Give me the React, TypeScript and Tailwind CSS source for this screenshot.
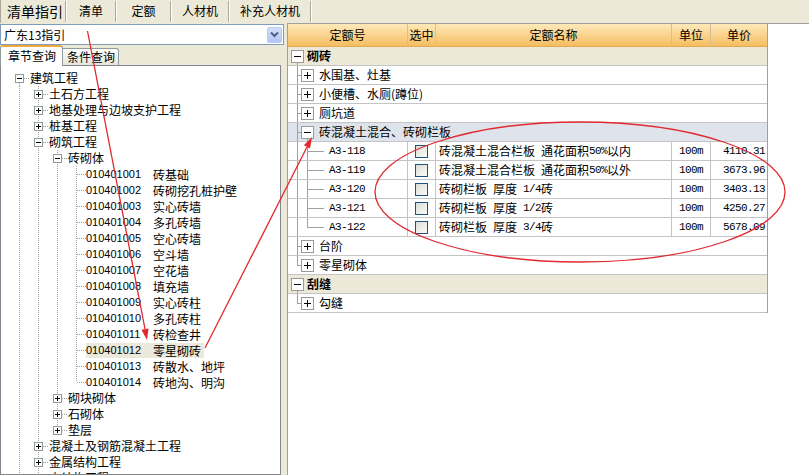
import React from 'react';

type TreeRow = {
  g: string[];
  box?: 'plus' | 'minus';
  text: string;
  code?: string;
  sel?: boolean;
};

const leaves: [string, string][] = [
  ['010401001', '砖基础'],
  ['010401002', '砖砌挖孔桩护壁'],
  ['010401003', '实心砖墙'],
  ['010401004', '多孔砖墙'],
  ['010401005', '空心砖墙'],
  ['010401006', '空斗墙'],
  ['010401007', '空花墙'],
  ['010401008', '填充墙'],
  ['010401009', '实心砖柱'],
  ['010401010', '多孔砖柱'],
  ['010401011', '砖检查井'],
  ['010401012', '零星砌砖'],
  ['010401013', '砖散水、地坪'],
  ['010401014', '砖地沟、明沟'],
];

const tree: TreeRow[] = [
  { g: ['R'], box: 'minus', text: '建筑工程' },
  { g: ['|', 'T'], box: 'plus', text: '土石方工程' },
  { g: ['|', 'T'], box: 'plus', text: '地基处理与边坡支护工程' },
  { g: ['|', 'T'], box: 'plus', text: '桩基工程' },
  { g: ['|', 'T'], box: 'minus', text: '砌筑工程' },
  { g: ['|', '|', 'T'], box: 'minus', text: '砖砌体' },
  ...leaves.map(([c, t], i) => ({
    g: ['|', '|', '|', i === leaves.length - 1 ? 'L' : 'T'],
    code: c,
    text: t,
    sel: c === '010401012',
  })),
  { g: ['|', '|', 'T'], box: 'plus', text: '砌块砌体' },
  { g: ['|', '|', 'T'], box: 'plus', text: '石砌体' },
  { g: ['|', '|', 'L'], box: 'plus', text: '垫层' },
  { g: ['|', 'T'], box: 'plus', text: '混凝土及钢筋混凝土工程' },
  { g: ['|', 'T'], box: 'plus', text: '金属结构工程' },
  { g: ['|', 'T'], box: 'plus', text: '木结构工程' },
];

const DOT = '#a0a0a0';

function Guide({ g, box }: { g: string; box?: 'plus' | 'minus' }) {
  return (
    <svg width="19" height="16" className="block shrink-0" shapeRendering="crispEdges">
      {(g === '|' || g === 'T') && (
        <line x1="9.5" y1="0" x2="9.5" y2="16" stroke={DOT} strokeDasharray="1 1" />
      )}
      {g === 'L' && <line x1="9.5" y1="0" x2="9.5" y2="8" stroke={DOT} strokeDasharray="1 1" />}
      {g === 'R' && <line x1="9.5" y1="9" x2="9.5" y2="16" stroke={DOT} strokeDasharray="1 1" />}
      {(g === 'T' || g === 'L' || g === 'R') && (
        <line x1="10" y1="8.5" x2="19" y2="8.5" stroke={DOT} strokeDasharray="1 1" />
      )}
      {box && (
        <>
          <rect x="5.5" y="4.5" width="8" height="8" fill="#ffffff" stroke="#919b9c" />
          <line x1="7" y1="8.5" x2="12" y2="8.5" stroke="#000000" />
          {box === 'plus' && <line x1="9.5" y1="6" x2="9.5" y2="11" stroke="#000000" />}
        </>
      )}
    </svg>
  );
}

function Mixed({ text }: { text: string }) {
  const parts = text.split(/([\x20-\x7e]+)/).filter((p) => p.length > 0);
  return (
    <>
      {parts.map((p, i) =>
        /^[\x20-\x7e]+$/.test(p) ? (
          <span key={i} className="font-['Liberation_Mono',monospace] text-[11px] tracking-[-0.6px] whitespace-pre">
            {p}
          </span>
        ) : (
          <span key={i}>{p}</span>
        )
      )}
    </>
  );
}

function TopTabs() {
  const Sep = () => <div className="w-[2px] shrink-0 my-[1px] border-l border-r border-l-[#aca899] border-r-white" />;
  return (
    <div className="h-[23px] shrink-0 flex items-stretch">
      <div className="w-[65px] shrink-0 border-l border-l-[#aca899] pl-[6px] text-[14px] leading-[22px] whitespace-nowrap">清单指引</div>
      <Sep />
      <div className="w-[48px] shrink-0 text-center text-[12px] leading-[22px]">清单</div>
      <Sep />
      <div className="w-[53px] shrink-0 text-center text-[12px] leading-[22px]">定额</div>
      <Sep />
      <div className="w-[56px] shrink-0 text-center text-[12px] leading-[22px]">人材机</div>
      <Sep />
      <div className="w-[80px] shrink-0 text-center text-[12px] leading-[22px] whitespace-nowrap">补充人材机</div>
      <Sep />
    </div>
  );
}

function LeftPanel() {
  return (
    <div className="w-[284px] shrink-0 flex flex-col pt-[1px]">
      <div className="h-[21px] shrink-0 bg-white border border-[#7f9db9] flex items-center justify-between pl-[3px] pr-[1px]">
        <span className="text-[12px] leading-[19px]">广东13指引</span>
        <div className="w-[15px] h-[16px] rounded-[2px] bg-linear-to-b from-[#d4dffb] to-[#b2c5f4] border border-[#b9c9ef] flex items-center justify-center">
          <svg width="9" height="7" viewBox="0 0 9 7">
            <path d="M1 1.5 L4.5 5 L8 1.5" fill="none" stroke="#4d6185" strokeWidth="2" />
          </svg>
        </div>
      </div>
      <div className="h-[20px] shrink-0 flex items-end">
        <div className="relative z-10 -mb-px h-[21px] w-[63px] shrink-0 bg-white border border-[#919b9c] border-b-0 border-t-2 border-t-[#f2a93b] rounded-t-[3px] pl-[7px] text-[12px] leading-[17px]">章节查询</div>
        <div className="h-[17px] w-[56px] shrink-0 bg-linear-to-b from-[#fefefe] to-[#e6e4da] border border-[#919b9c] border-b-0 border-l-0 rounded-tr-[3px] pl-[4px] text-[12px] leading-[16px]">条件查询</div>
      </div>
      <div className="flex-1 w-[281px] bg-white border border-[#828790] pt-[4px] pl-[9px] overflow-hidden">
        {tree.map((r, i) => (
          <div key={i} className="flex h-[16px] items-center whitespace-nowrap">
            {r.g.map((gg, j) => (
              <Guide key={j} g={gg} box={j === r.g.length - 1 ? r.box : undefined} />
            ))}
            {r.code ? (
              <span className={'flex h-[15px] items-center pr-[3px] ' + (r.sel ? 'bg-[#ebe8dc]' : '')}>
                <span className="w-[67px] font-['Liberation_Sans',sans-serif] text-[11px] leading-[15px]">{r.code}</span>
                <span className="text-[12px] leading-[15px]">{r.text}</span>
              </span>
            ) : (
              <span className="pl-[1px] text-[12px] leading-[16px]">{r.text}</span>
            )}
          </div>
        ))}
      </div>
    </div>
  );
}

const LINE = '#a0a0a0';

function GroupRow({ text }: { text: string }) {
  return (
    <div className="h-[19px] flex items-center bg-[#ece9d8] border-b border-[#c4c4c4]">
      <svg width="19" height="18" className="block shrink-0" shapeRendering="crispEdges">
        <rect x="3.5" y="3.5" width="12" height="12" fill="#ffffff" stroke="#9a9a9a" />
        <line x1="6" y1="9.5" x2="13" y2="9.5" stroke="#000000" />
        <line x1="9.5" y1="16" x2="9.5" y2="18" stroke={LINE} />
      </svg>
      <span className="text-[12px] leading-[18px] font-bold">{text}</span>
    </div>
  );
}

function SubRow({ text, expanded, last, sel }: { text: string; expanded?: boolean; last?: boolean; sel?: boolean }) {
  return (
    <div className={'h-[19px] flex items-center border-b border-[#c4c4c4] ' + (sel ? 'bg-[#dfe4ec]' : 'bg-white')}>
      <svg width="31" height="18" className="block shrink-0" shapeRendering="crispEdges">
        <line x1="9.5" y1="0" x2="9.5" y2={last ? 9.5 : 18} stroke={LINE} />
        <line x1="9.5" y1="9.5" x2="13" y2="9.5" stroke={LINE} />
        <rect x="13.5" y="3.5" width="12" height="12" fill="#ffffff" stroke="#9a9a9a" />
        <line x1="16" y1="9.5" x2="23" y2="9.5" stroke="#000000" />
        {!expanded && <line x1="19.5" y1="6" x2="19.5" y2="13" stroke="#000000" />}
        {expanded && <line x1="19.5" y1="16" x2="19.5" y2="18" stroke={LINE} />}
      </svg>
      <span className="text-[12px] leading-[18px] whitespace-nowrap">{text}</span>
    </div>
  );
}

function LeafRow({ code, name, price, last }: { code: string; name: string; price: string; last?: boolean }) {
  return (
    <div className="h-[19px] grid grid-cols-[120px_28px_236px_39px_56px] bg-white border-b border-[#c4c4c4]">
      <div className="flex items-center border-r border-[#c4c4c4]">
        <svg width="41" height="18" className="block shrink-0" shapeRendering="crispEdges">
          <line x1="9.5" y1="0" x2="9.5" y2="18" stroke={LINE} />
          <line x1="19.5" y1="0" x2="19.5" y2={last ? 9.5 : 18} stroke={LINE} />
          <line x1="19.5" y1="9.5" x2="36" y2="9.5" stroke={LINE} />
        </svg>
        <span className="font-['Liberation_Mono',monospace] text-[11px] tracking-[-0.6px] leading-[18px]">{code}</span>
      </div>
      <div className="flex items-center justify-center border-r border-[#c4c4c4]">
        <div className="w-[13px] h-[13px] border border-[#1c5180] bg-linear-to-br from-[#dcdcd7] to-[#fbfbf9]" />
      </div>
      <div className="flex items-center pl-[3px] border-r border-[#c4c4c4] text-[12px] leading-[18px] whitespace-nowrap overflow-hidden">
        <Mixed text={name} />
      </div>
      <div className="flex items-center justify-center border-r border-[#c4c4c4] font-['Liberation_Mono',monospace] text-[11px] tracking-[-0.6px] leading-[18px]">100m</div>
      <div className="flex items-center justify-end pr-[2px] font-['Liberation_Mono',monospace] text-[11px] tracking-[-0.6px] leading-[18px]">{price}</div>
    </div>
  );
}

function RightPanel() {
  const hdr = 'flex items-center justify-center border-r border-[#d2bf98] text-[12px] leading-[22px]';
  return (
    <div className="flex-1 bg-white border-l border-t border-[#a0a0a0] overflow-hidden">
      <div className="w-[480px] border-r border-[#a0a0a0]">
        <div className="h-[23px] grid grid-cols-[120px_28px_236px_39px_56px] bg-linear-to-b from-[#fde9b9] to-[#f5bd5e] border-b border-[#e2ab55]">
          <div className={hdr}>定额号</div>
          <div className={hdr}>选中</div>
          <div className={hdr}>定额名称</div>
          <div className={hdr}>单位</div>
          <div className="flex items-center justify-center text-[12px] leading-[22px]">单价</div>
        </div>
        <GroupRow text="砌砖" />
        <SubRow text="水围基、灶基" />
        <SubRow text="小便槽、水厕(蹲位)" />
        <SubRow text="厕坑道" />
        <SubRow text="砖混凝土混合、砖砌栏板" expanded sel />
        <LeafRow code="A3-118" name="砖混凝土混合栏板 通花面积50%以内" price="4110.31" />
        <LeafRow code="A3-119" name="砖混凝土混合栏板 通花面积50%以外" price="3673.96" />
        <LeafRow code="A3-120" name="砖砌栏板 厚度 1/4砖" price="3403.13" />
        <LeafRow code="A3-121" name="砖砌栏板 厚度 1/2砖" price="4250.27" />
        <LeafRow code="A3-122" name="砖砌栏板 厚度 3/4砖" price="5678.09" last />
        <SubRow text="台阶" />
        <SubRow text="零星砌体" last />
        <GroupRow text="刮缝" />
        <SubRow text="勾缝" last />
      </div>
    </div>
  );
}

function Annotations() {
  const red = '#e02a30';
  return (
    <svg className="absolute inset-0 pointer-events-none" width="809" height="475" viewBox="0 0 809 475">
      <g stroke={red} strokeWidth="1.3" fill="none">
        <line x1="87.5" y1="31" x2="145" y2="329" />
        <line x1="205" y1="348" x2="307" y2="147" />
        <ellipse cx="580" cy="192" rx="205" ry="70" />
      </g>
      <polygon fill={red} points="147,340 148.6,328.4 141.4,329.8" />
      <polygon fill={red} points="312,137 310.1,148.4 303.9,145.2" />
    </svg>
  );
}

export default function App() {
  return (
    <div className="relative w-[809px] h-[475px] overflow-hidden bg-[#ece9d8] flex flex-col font-['Noto_Sans_CJK_SC',sans-serif] text-black">
      <TopTabs />
      <div className="flex flex-1 min-h-0">
        <LeftPanel />
        <div className="w-[3px] shrink-0" />
        <RightPanel />
      </div>
      <Annotations />
    </div>
  );
}
